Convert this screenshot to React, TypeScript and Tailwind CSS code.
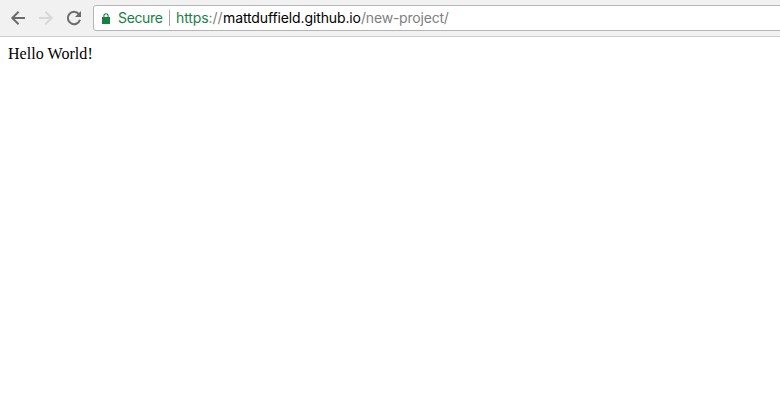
export default function App() {
  return (
    <div className="flex h-[413px] w-[780px] flex-col overflow-hidden bg-white">
      <header className="flex h-[37px] shrink-0 items-start border-b border-[#cecece] bg-[#f1f1f1] pl-[10px] pt-[5px]">
        <div className="flex h-[26px] items-center gap-3">
          <svg width="16" height="16" viewBox="0 0 16 16" fill="none" stroke="#6b6b6b" strokeWidth="2">
            <path d="M15 8H2.5M8.6 1.7 2.3 8l6.3 6.3" />
          </svg>
          <svg width="16" height="16" viewBox="0 0 16 16" fill="none" stroke="#d8d8d8" strokeWidth="2">
            <path d="M1 8h12.5M7.4 1.7 13.7 8l-6.3 6.3" />
          </svg>
          <svg width="16" height="16" viewBox="0 0 16 16" fill="none" stroke="#6b6b6b" strokeWidth="2">
            <path d="M12.8 4A6.2 6.2 0 1 0 14 9.8" />
            <path d="M15 1v6H9z" fill="#6b6b6b" stroke="none" />
          </svg>
        </div>
        <div className="ml-[11px] flex h-[26px] w-[700px] shrink-0 items-center rounded-[3px] border border-[#b5b5b5] bg-white pl-2 font-[Inter,sans-serif] text-[14px] leading-none [font-variant-ligatures:none]">
          <svg width="8" height="11" viewBox="0 0 8 11" fill="none">
            <path d="M0 4h8v7H0z" fill="#188045" />
            <path d="M1.9 4V2.8a2.1 2.1 0 0 1 4.2 0V4" stroke="#188045" strokeWidth="1.1" />
          </svg>
          <span className="ml-2 w-[45px] whitespace-nowrap tracking-[-0.35px] text-[#188045]">Secure</span>
          <span className="ml-[6px] mr-[6px] h-4 w-px bg-[#a6a6a6]" />
          <span className="flex whitespace-nowrap text-[#808080]">
            <span className="w-[47px] tracking-[-0.1px]"><span className="text-[#188045]">https</span>://</span>
            <span className="w-[138px] tracking-[-0.12px] text-black">mattduffield.github.io</span>
            <span className="tracking-[-0.2px]">/new-project/</span>
          </span>
        </div>
      </header>
      <main className="p-2 font-['Liberation_Serif',serif] text-[16px] leading-[18px] tracking-[0.05px] text-black">Hello World!</main>
    </div>
  );
}
